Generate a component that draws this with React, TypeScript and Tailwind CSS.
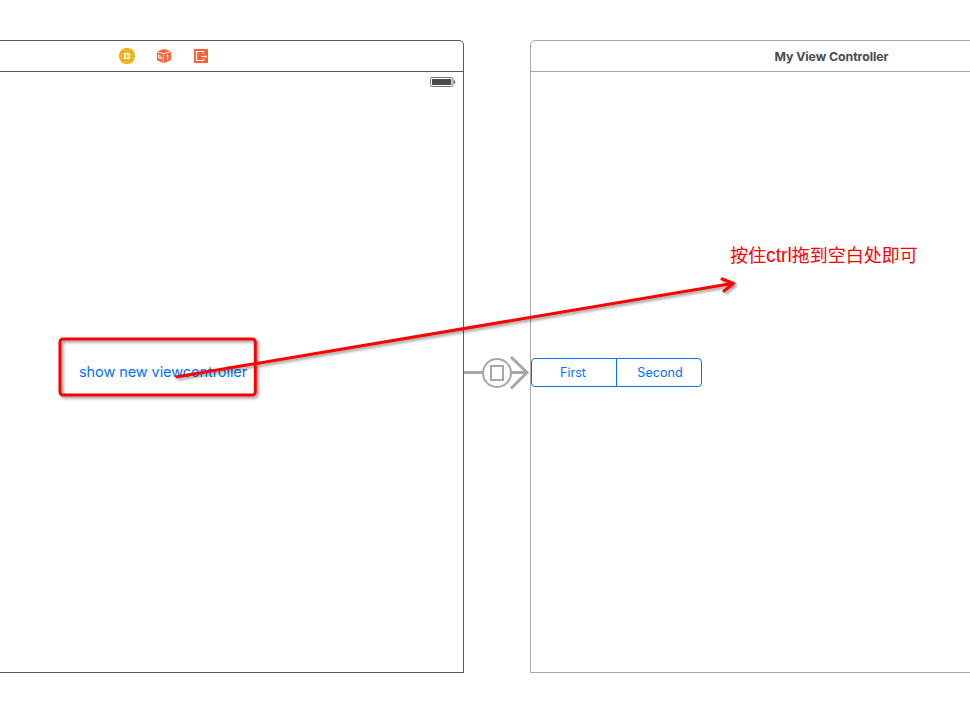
import React from 'react';

function ControllerIcon() {
  return (
    <svg width="16" height="16" viewBox="0 0 16 16" aria-hidden="true">
      <circle cx="8" cy="8" r="8" fill="#f0a500" />
      <circle cx="8" cy="8" r="6.6" fill="#fdc93c" />
      <rect x="3" y="3" width="10" height="10" fill="#f0a500" />
      <rect x="5.5" y="5.5" width="5" height="5" fill="#fdc93c" stroke="#fff" strokeWidth="1.4" />
    </svg>
  );
}

function ResponderIcon() {
  return (
    <svg width="16" height="16" viewBox="0 0 16 16" aria-hidden="true">
      <path d="M8.2 1 14.6 3 7.6 5.3 1.2 3.3Z" fill="#fc6138" />
      <path d="M1 4.2 7.2 6.1V15L1 12.2Z" fill="#fc6138" />
      <path d="M7.9 6.1 15 3.9V12.2L7.9 15Z" fill="#fc6138" />
      <path d="M2.7 7v3l1.5.7V7.6Z" fill="none" stroke="#fff" strokeWidth="0.9" />
      <path d="M5.7 9v3.6" fill="none" stroke="#fff" strokeWidth="0.7" />
      <path d="M10.4 8.1 11.6 7.4v4.7" fill="none" stroke="#fff" strokeWidth="1.2" />
    </svg>
  );
}

function ExitIcon() {
  return (
    <svg width="14" height="14" viewBox="0 0 14 14" aria-hidden="true">
      <rect width="14" height="14" fill="#fc6138" />
      <path d="M9.5 5V2.5h-7v9h7V9" fill="none" stroke="#fff" strokeWidth="1.1" />
      <path d="M7 7.5h6M11.5 6v3" fill="none" stroke="#fff" strokeWidth="1" />
    </svg>
  );
}

function Battery() {
  return (
    <svg width="26" height="10" viewBox="0 0 26 10" aria-hidden="true">
      <rect x="0.5" y="0.5" width="22.5" height="9" rx="1.8" fill="#fff" stroke="#777" />
      <rect x="2" y="2" width="19.3" height="6" rx="0.5" fill="#4b4b4b" />
      <path d="M24 3.2c1.3.3 1.3 3.3 0 3.6Z" fill="#555" stroke="#555" strokeWidth="0.4" />
    </svg>
  );
}

function Segue() {
  return (
    <svg width="66" height="36" viewBox="0 0 66 36" fill="none" stroke="#a6a6a6" aria-hidden="true">
      <path d="M0 17.5H19M47 17.5H62" strokeWidth="3" />
      <circle cx="33" cy="18" r="14" strokeWidth="2" />
      <rect x="27" y="11" width="12" height="14" strokeWidth="2" />
      <path d="M47 2 63 17.5 47 33.5" strokeWidth="3" />
    </svg>
  );
}

function Annotations() {
  return (
    <>
      <svg
        className="pointer-events-none absolute left-0 top-0 drop-shadow-[2px_2px_1.5px_rgba(0,0,0,0.4)]"
        width="970"
        height="705"
        viewBox="0 0 970 705"
        fill="none"
        stroke="#ff0000"
        strokeWidth="3"
        strokeLinejoin="round"
        aria-hidden="true"
      >
        <rect x="60" y="339" width="195.3" height="56" rx="3" />
        <path d="M175.5 377 732 283.5" />
        <path d="M722 279 733.5 283.3 724 291" strokeLinecap="round" />
      </svg>
      <p className="absolute left-[730px] top-[243px] whitespace-nowrap font-['Liberation_Sans','Noto_Sans_CJK_SC',sans-serif] text-lg leading-[26px] text-[#ff0000]">
        按住<span className="text-[19.3px] leading-none">ctrl</span>拖到空白处即可
      </p>
    </>
  );
}

export default function App() {
  return (
    <main className="relative h-[705px] w-[970px] overflow-hidden bg-white pt-10 font-['Inter',sans-serif]">
      <div className="flex h-[633px]">
        <section className="flex w-[464px] shrink-0 flex-col rounded-tr-[5px] border border-l-0 border-[#5b5b5e]">
          <header className="flex h-[31px] shrink-0 items-center border-b border-[#5b5b5e] pl-[119px]">
            <ControllerIcon />
            <span className="ml-[21px]"><ResponderIcon /></span>
            <span className="ml-[22px]"><ExitIcon /></span>
          </header>
          <div className="flex h-5 shrink-0 items-center justify-end pr-[7px]">
            <Battery />
          </div>
          <button className="ml-[79px] mt-[269px] self-start whitespace-nowrap text-[14.5px] leading-[22px] tracking-[-0.08px] text-[#0070ff]">
            show new viewcontroller
          </button>
        </section>

        <div className="flex w-[66px] shrink-0 items-start pt-[315px]">
          <Segue />
        </div>

        <section className="flex w-[603px] shrink-0 flex-col rounded-t-[5px] border border-[#a8a8a8]">
          <header className="flex h-[31px] shrink-0 items-center justify-center border-b border-[#a8a8a8] pt-0.5 text-[12.3px] font-bold tracking-[-0.05px] text-[#4a4a4a]">
            My View Controller
          </header>
          <div className="mt-[286px] flex h-[29px] w-[171px] rounded-[4px] border border-[#0070ff] text-[12.6px] text-[#0070ff]">
            <button className="w-[85px] border-r border-[#0070ff] pr-0.5 pt-0.5">First</button>
            <button className="flex-1 pl-0.5 pt-0.5">Second</button>
          </div>
        </section>
      </div>
      <Annotations />
    </main>
  );
}
